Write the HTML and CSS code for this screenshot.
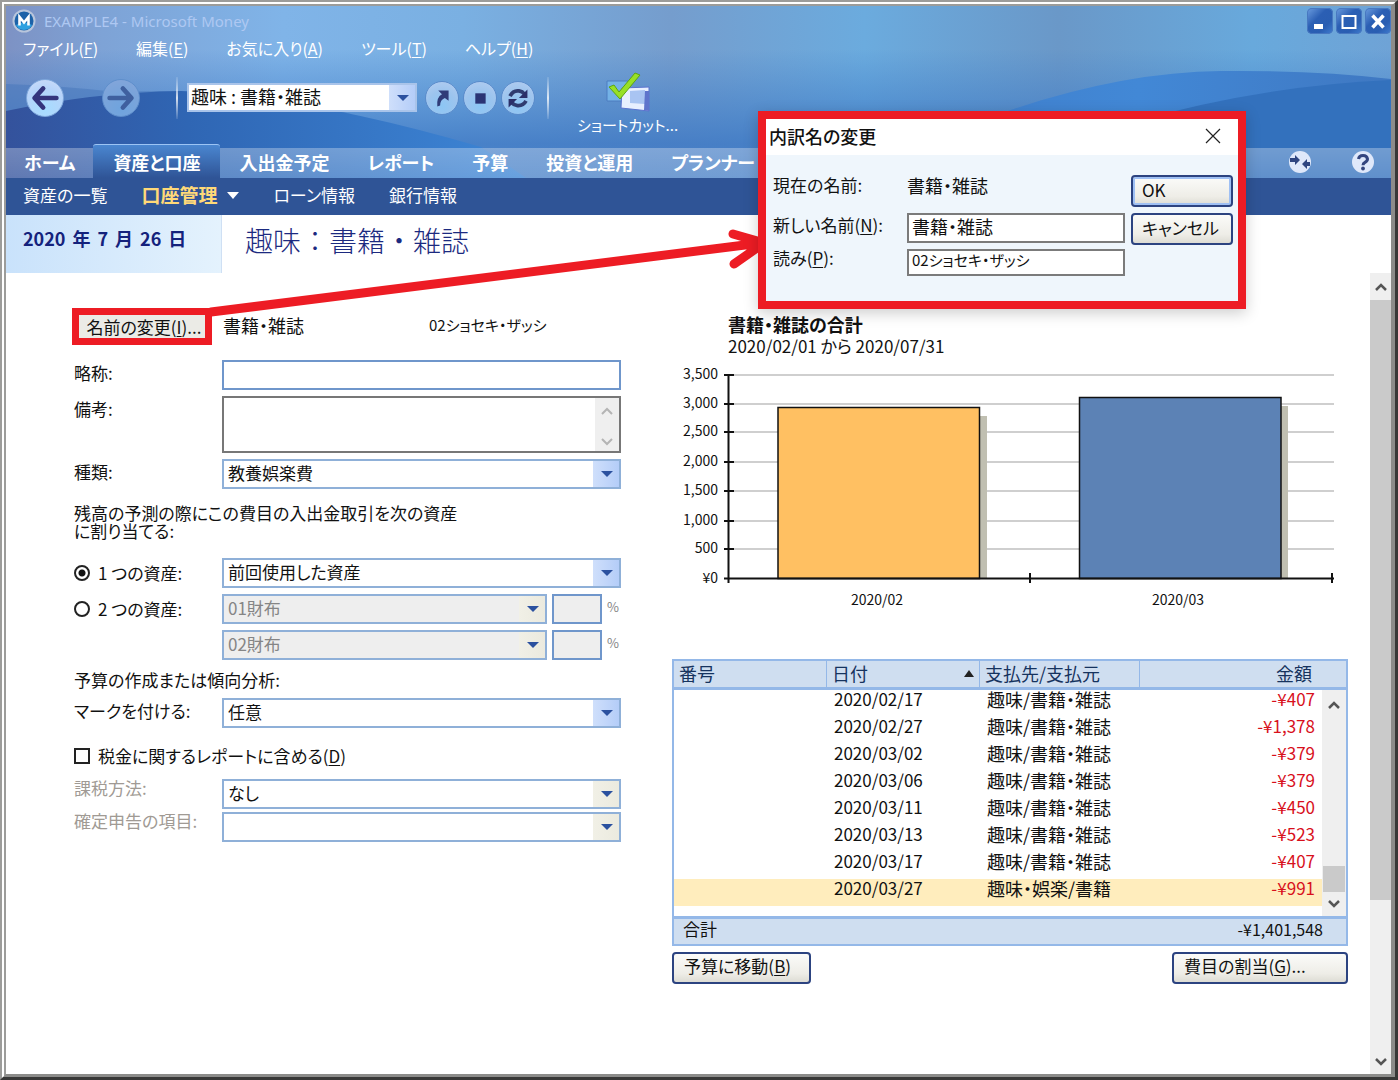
FILE: index.html
```html
<!DOCTYPE html>
<html lang="ja">
<head>
<meta charset="utf-8">
<title>EXAMPLE4 - Microsoft Money</title>
<link rel="stylesheet" href="styles.css">
</head>
<body>
<div class="window">
  <header class="masthead">
    <svg class="sky" viewBox="0 0 1385 172" preserveAspectRatio="none" aria-hidden="true">
      <defs>
        <linearGradient id="skyH" x1="0" x2="1" y1="0" y2="0">
          <stop offset="0" stop-color="#7d92c4"/>
          <stop offset=".07" stop-color="#7ea3d6"/>
          <stop offset=".2" stop-color="#80b4e8"/>
          <stop offset=".33" stop-color="#7ab0e2"/>
          <stop offset=".48" stop-color="#759dcd"/>
          <stop offset=".62" stop-color="#6babde"/>
          <stop offset=".76" stop-color="#6a98c8"/>
          <stop offset=".9" stop-color="#68a9dc"/>
          <stop offset="1" stop-color="#6fa3d6"/>
        </linearGradient>
        <linearGradient id="skyV" x1="0" x2="0" y1="0" y2="1">
          <stop offset=".25" stop-color="#3d7cc8" stop-opacity="0"/>
          <stop offset=".8" stop-color="#3f79c4" stop-opacity=".85"/>
          <stop offset="1" stop-color="#3f79c4" stop-opacity=".8"/>
        </linearGradient>
        <linearGradient id="hill" x1="0" x2="1" y1="0" y2="0">
          <stop offset="0" stop-color="#34529c"/>
          <stop offset=".35" stop-color="#2f66b4"/>
          <stop offset="1" stop-color="#3d86d6"/>
        </linearGradient>
        <linearGradient id="swell" x1="0" x2="1" y1="0" y2="0">
          <stop offset="0" stop-color="#3f7cc8"/>
          <stop offset=".5" stop-color="#4288d6"/>
          <stop offset="1" stop-color="#3f78c2"/>
        </linearGradient>
      </defs>
      <rect width="1385" height="172" fill="url(#skyH)"/>
      <rect width="1385" height="172" fill="url(#skyV)"/>
      <path d="M0 78Q60 80 110 86Q250 80 345 108L330 172H0Z" fill="#4878bc" opacity=".55"/>
      <path d="M0 105Q90 86 175 85Q300 90 475 141L520 172H0Z" fill="url(#hill)"/>
      <path d="M960 120Q1100 66 1215 65Q1310 64 1385 73V172H880Z" fill="url(#swell)"/>
      <path d="M1120 118Q1250 80 1385 74V172H1060Z" fill="#3371bd"/>
    </svg>

    <div class="titlebar">
      <svg class="logo" viewBox="0 0 24 24" aria-hidden="true">
        <circle cx="12" cy="12" r="11.500" fill="#b9c6dc"/>
        <circle cx="12" cy="12" r="9.500" fill="#1d62a8"/>
        <path d="M4 16a9 9 0 0 0 16 0Q12 11 4 16" fill="#2fa0e0"/>
        <path d="M7.500 16.500V8l4.500 5.500L16.500 8v8.500" fill="none" stroke="#fff" stroke-width="2.600"/>
      </svg>
      <span class="app-name">EXAMPLE4 - Microsoft Money</span>
      <div class="window-buttons">
        <button type="button" aria-label="最小化"><svg viewBox="0 0 26 26"><path d="M7 18.500h9" stroke="#fff" stroke-width="5"/></svg></button>
        <button type="button" aria-label="最大化"><svg viewBox="0 0 26 26"><path d="M6 8h14M6 20h14M6.500 7v14M19.500 7v14" stroke="#fff" stroke-width="2"/></svg></button>
        <button type="button" aria-label="閉じる"><svg viewBox="0 0 26 26"><path d="M7.500 7.500l11 12M18.500 7.500l-11 12" stroke="#fff" stroke-width="3.500"/></svg></button>
      </div>
    </div>

    <nav class="menu">
      <a href="#">ファイル(<u>F</u>)</a>
      <a href="#">編集(<u>E</u>)</a>
      <a href="#">お気に入り(<u>A</u>)</a>
      <a href="#">ツール(<u>T</u>)</a>
      <a href="#">ヘルプ(<u>H</u>)</a>
    </nav>

    <div class="toolbar">
      <button type="button" class="round large" aria-label="戻る"><svg viewBox="0 0 38 38"><path d="M31 19H9M17 9L8 19l9 10" fill="none" stroke="#34347c" stroke-width="5" stroke-linecap="round" stroke-linejoin="round"/></svg></button>
      <button type="button" class="round large dim" aria-label="進む"><svg viewBox="0 0 38 38"><path d="M7 19h22M21 9l9 10-9 10" fill="none" stroke="#3f609f" stroke-width="5" stroke-linecap="round" stroke-linejoin="round"/></svg></button>
      <span class="divider"></span>
      <select class="address" aria-label="表示中の項目"><option>趣味 : 書籍・雑誌</option></select>
      <div class="round-group">
        <button type="button" class="round" aria-label="移動"><svg viewBox="0 0 34 34"><path d="M12 26Q11 16 17 13L13 9h11v11l-4-3Q15 19 15 25Z" fill="#2f3c78"/></svg></button>
        <button type="button" class="round" aria-label="中止"><svg viewBox="0 0 34 34"><path d="M12 12h11v11H12Z" fill="#2b3474"/></svg></button>
        <button type="button" class="round" aria-label="更新"><svg viewBox="0 0 34 34"><path d="M8.500 15Q12 8.500 18 9.500q4 .7 5.500 3M25.500 20q-3 5.500-9 5-4-.5-6-3" fill="none" stroke="#2f3c70" stroke-width="4"/><path d="M27 8v9h-9ZM7 27v-9h9Z" fill="#2b2f68"/></svg></button>
      </div>
      <span class="divider"></span>
      <button type="button" class="shortcut">
        <svg viewBox="0 0 46 44" aria-hidden="true">
          <path d="M2 10h21v20H2Z" fill="#74b2e6" stroke="#4c7cc0"/>
          <path d="M17 17l27-1v24l-28-3Z" fill="#e8efff" stroke="#5b73cf"/>
          <path d="M25 20l15-1v14l-15-1Z" fill="#a9c4f2"/>
          <path d="M40 20h4v20l-5-1Z" fill="#5f74cc"/>
          <path d="M4 16l5-2 5 7L30 2l5 2-20 24Z" fill="#98e026" stroke="#5da512"/>
        </svg>
        ショートカット...
      </button>
    </div>

    <nav class="tabs">
      <a href="#">ホーム</a>
      <a href="#" class="current">資産と口座</a>
      <a href="#">入出金予定</a>
      <a href="#">レポート</a>
      <a href="#">予算</a>
      <a href="#">投資と運用</a>
      <a href="#">プランナー</a>
      <span class="tab-tools">
        <button type="button" aria-label="同期"><svg viewBox="0 0 24 24"><circle cx="12" cy="12" r="11" fill="#dfe8fa"/><path d="M2 8h5V5l5 5-5 5v-3H2ZM22 12h-3V9l-5 5 5 5v-3h3Z" fill="#2f4580"/></svg></button>
        <button type="button" aria-label="ヘルプ"><svg viewBox="0 0 24 24"><circle cx="12" cy="12" r="11" fill="#dfe8fa"/><path d="M7.500 9Q8 5.500 12 5.500t4.500 3.500q0 2-2.500 3.300-2 1-2 3" fill="none" stroke="#34457e" stroke-width="3"/><circle cx="12" cy="18.500" r="1.900" fill="#34457e"/></svg></button>
      </span>
    </nav>
  </header>

  <nav class="subnav">
    <a href="#">資産の一覧</a>
    <a href="#" class="current">口座管理<svg viewBox="0 0 12 8" aria-hidden="true"><path d="M0 1h12L6 8Z" fill="#fff"/></svg></a>
    <a href="#">ローン情報</a>
    <a href="#">銀行情報</a>
  </nav>

  <div class="page-head">
    <div class="date"><span>2020</span> <span>年</span> <span>7</span> <span>月</span> <span>26</span> <span>日</span></div>
    <h1>趣味：書籍・雑誌</h1>
  </div>

  <div class="viewport">
    <main class="content">
      <form class="details">
        <div class="name-row">
          <button type="button" class="rename">名前の変更(<u>I</u>)...</button>
          <span class="name">書籍・雑誌</span>
          <span class="reading">02ショセキ・ザッシ</span>
        </div>

        <div class="fields">
          <label for="abbr">略称:</label>
          <input id="abbr" type="text">

          <label for="memo" class="top">備考:</label>
          <div class="memo">
            <textarea id="memo"></textarea>
            <span class="memo-bar"><svg viewBox="0 0 12 8"><path d="M1 7l5-5 5 5" fill="none" stroke="#b4b4b4" stroke-width="2"/></svg><svg viewBox="0 0 12 8"><path d="M1 1l5 5 5-5" fill="none" stroke="#b4b4b4" stroke-width="2"/></svg></span>
          </div>

          <label for="kind">種類:</label>
          <select id="kind"><option>教養娯楽費</option></select>

          <p class="note">残高の予測の際にこの費目の入出金取引を次の資産<br>に割り当てる:</p>

          <label class="choice"><input type="radio" name="asset" checked>1 つの資産:</label>
          <select aria-label="1 つの資産"><option>前回使用した資産</option></select>

          <label class="choice"><input type="radio" name="asset">2 つの資産:</label>
          <div class="split">
            <select disabled aria-label="資産 1"><option>01財布</option></select>
            <input type="text" disabled id="p1"><label for="p1">%</label>
          </div>

          <div class="split second">
            <select disabled aria-label="資産 2"><option>02財布</option></select>
            <input type="text" disabled id="p2"><label for="p2">%</label>
          </div>

          <p class="heading">予算の作成または傾向分析:</p>

          <label for="mark">マークを付ける:</label>
          <select id="mark"><option>任意</option></select>

          <label class="choice wide"><input type="checkbox"><span>税金に関するレポートに含める(<u>D</u>)</span></label>

          <label for="tax" class="muted">課税方法:</label>
          <select id="tax" class="idle"><option>なし</option></select>

          <label for="return" class="muted">確定申告の項目:</label>
          <select id="return" class="idle"><option></option></select>
        </div>
      </form>

      <section class="summary">
        <h2>書籍・雑誌の合計</h2>
        <p class="period">2020/02/01 から 2020/07/31</p>

        <svg class="chart" viewBox="0 -8 676 258" role="img" aria-label="月別の合計">
          <g stroke="#cfcfcf" stroke-width="2">
            <path d="M56 11H662M56 40H662M56 68H662M56 98H662M56 127H662M56 157H662M56 185H662"/>
          </g>
          <path d="M306 52h9v162h-9ZM608 42h8v172h-8Z" fill="#c0bfb1"/>
          <path d="M106 43.500h201.500V214.500H106Z" fill="#ffc062" stroke="#111" stroke-width="1.500"/>
          <path d="M407.500 33.500h201.500V214.500H407.500Z" fill="#5c82b5" stroke="#111" stroke-width="1.500"/>
          <g stroke="#111" stroke-width="2">
            <path d="M56.500 10V219M52 11h10M52 40h10M52 68h10M52 98h10M52 127h10M52 157h10M52 185h10M52 214.500H662"/>
            <path d="M358 209v10M660 209v10"/>
          </g>
          <g class="tick" text-anchor="end">
            <text x="46" y="15">3,500</text>
            <text x="46" y="44">3,000</text>
            <text x="46" y="72">2,500</text>
            <text x="46" y="102">2,000</text>
            <text x="46" y="131">1,500</text>
            <text x="46" y="161">1,000</text>
            <text x="46" y="189">500</text>
            <text x="46" y="219">¥0</text>
          </g>
          <g class="tick" text-anchor="middle">
            <text x="205" y="241">2020/02</text>
            <text x="506" y="241">2020/03</text>
          </g>
        </svg>

        <table class="register">
          <colgroup><col class="c-no"><col class="c-date"><col class="c-payee"><col><col class="c-bar"></colgroup>
          <thead>
            <tr>
              <th>番号</th>
              <th><span class="sorted">日付<svg viewBox="0 0 10 7" aria-hidden="true"><path d="M0 7h10L5 0Z" fill="#222"/></svg></span></th>
              <th>支払先/支払元</th>
              <th colspan="2" class="amount">金額</th>
            </tr>
          </thead>
          <tbody>
            <tr><td></td><td>2020/02/17</td><td class="payee">趣味/書籍・雑誌</td><td class="amount">-¥407</td>
              <td rowspan="9" class="bar-cell"><div class="list-bar"><svg viewBox="0 0 12 8"><path d="M1 7l5-5 5 5" fill="none" stroke="#555" stroke-width="2.500"/></svg><span></span><svg viewBox="0 0 12 8"><path d="M1 1l5 5 5-5" fill="none" stroke="#555" stroke-width="2.500"/></svg></div></td></tr>
            <tr><td></td><td>2020/02/27</td><td class="payee">趣味/書籍・雑誌</td><td class="amount">-¥1,378</td></tr>
            <tr><td></td><td>2020/03/02</td><td class="payee">趣味/書籍・雑誌</td><td class="amount">-¥379</td></tr>
            <tr><td></td><td>2020/03/06</td><td class="payee">趣味/書籍・雑誌</td><td class="amount">-¥379</td></tr>
            <tr><td></td><td>2020/03/11</td><td class="payee">趣味/書籍・雑誌</td><td class="amount">-¥450</td></tr>
            <tr><td></td><td>2020/03/13</td><td class="payee">趣味/書籍・雑誌</td><td class="amount">-¥523</td></tr>
            <tr><td></td><td>2020/03/17</td><td class="payee">趣味/書籍・雑誌</td><td class="amount">-¥407</td></tr>
            <tr class="selected"><td></td><td>2020/03/27</td><td class="payee">趣味・娯楽/書籍</td><td class="amount">-¥991</td></tr>
            <tr class="filler"><td colspan="4"></td></tr>
          </tbody>
          <tfoot>
            <tr><td colspan="2">合計</td><td colspan="3" class="amount">-¥1,401,548</td></tr>
          </tfoot>
        </table>

        <div class="actions">
          <button type="button" class="push">予算に移動(<u>B</u>)</button>
          <button type="button" class="push wide">費目の割当(<u>G</u>)...</button>
        </div>
      </section>
    </main>

    <div class="page-bar" aria-hidden="true">
      <svg viewBox="0 0 12 8"><path d="M1 7l5-5 5 5" fill="none" stroke="#555" stroke-width="2.500"/></svg>
      <span></span>
      <svg viewBox="0 0 12 8"><path d="M1 1l5 5 5-5" fill="none" stroke="#555" stroke-width="2.500"/></svg>
    </div>
  </div>

  <svg class="pointer" viewBox="0 0 560 100" aria-hidden="true">
    <path d="M2 86L552 17M524 8L555 17L525 38" fill="none" stroke="#ed1c24" stroke-width="9" stroke-linecap="round"/>
  </svg>

  <div class="dialog" role="dialog" aria-labelledby="dialog-title">
    <div class="dialog-title">
      <span id="dialog-title">内訳名の変更</span>
      <button type="button" aria-label="閉じる"><svg viewBox="0 0 16 16"><path d="M1 1l14 14M15 1L1 15" stroke="#222" stroke-width="1.200"/></svg></button>
    </div>
    <form class="dialog-body">
      <div class="dialog-fields">
        <span>現在の名前:</span><output class="name">書籍・雑誌</output>
        <label for="new-name">新しい名前(<u>N</u>):</label><input id="new-name" class="name" type="text" value="書籍・雑誌">
        <label for="reading">読み(<u>P</u>):</label><input id="reading" class="reading" type="text" value="02ショセキ・ザッシ">
      </div>
      <div class="dialog-buttons">
        <button type="button" class="push default">OK</button>
        <button type="button" class="push">キャンセル</button>
      </div>
    </form>
  </div>
</div>
</body>
</html>
```
FILE: styles.css
```css
* {
  box-sizing: border-box;
}

body {
  margin: 0;
  color: #111;
  background: #fff;
  font-family: "Noto Sans CJK JP", sans-serif;
  font-size: 17px;
  line-height: 20px;
  font-feature-settings: "palt";
}

h1, h2, p {
  margin: 0;
}

a {
  color: inherit;
  text-decoration: none;
}

u {
  text-underline-offset: 2px;
}

svg {
  display: block;
}

button, input, select, textarea {
  margin: 0;
  color: inherit;
  font: inherit;
  font-feature-settings: inherit;
}

button {
  padding: 0;
  border: 0;
  background: none;
}

.window {
  position: relative;
  display: flex;
  flex-direction: column;
  min-height: 100vh;
  border-style: double ridge ridge double;
  border-width: 6px 7px 6px 6px;
  border-color: #9c9c9a #8c8c8a #8c8c8a #9c9c9a;
}

.name {
  font-size: 18px;
}

.reading {
  font-size: 15px;
}

/* masthead */

.masthead {
  position: relative;
  color: #fff;
}

.sky {
  position: absolute;
  inset: 0;
  width: 100%;
  height: 100%;
}

.titlebar,
.menu,
.toolbar,
.tabs {
  position: relative;
  display: flex;
  align-items: center;
}

.titlebar {
  height: 30px;
  padding-left: 6px;
}

.logo {
  width: 24px;
  height: 24px;
}

.app-name {
  margin-left: 8px;
  color: #aec8f2;
  font-family: "Noto Sans", sans-serif;
  font-size: 15px;
}

.window-buttons {
  display: flex;
  gap: 3px;
  margin-left: auto;
}

.window-buttons button {
  width: 26px;
  height: 26px;
  border-radius: 5px;
  background: linear-gradient(135deg, #6d9ee0, #2b5fb4 40%, #2a5eb2 70%, #3f7cd0);
  box-shadow: inset 0 0 0 1px #4878c0;
}

.menu {
  gap: 38px;
  height: 24px;
  padding-left: 17px;
  font-size: 16px;
}

.toolbar {
  height: 84px;
  padding: 0 0 9px 20px;
}

.round {
  width: 34px;
  height: 34px;
  border: 1px solid #5b8ccb;
  border-radius: 50%;
  background: radial-gradient(circle at 50% 75%, #8cc6f4, #9cc4ee 50%, #b5cdf0);
}

.round svg {
  width: 32px;
  height: 32px;
}

.round.large {
  width: 38px;
  height: 38px;
  margin-right: 38px;
  border-color: #7fa8dc;
  background: radial-gradient(circle at 50% 80%, #a6dcff, #b6d4fa 60%, #cfdcf8);
}

.round.large svg {
  width: 36px;
  height: 36px;
}

.round.large.dim {
  margin-right: 36px;
  border-color: #5f8fcc;
  background: radial-gradient(circle at 50% 80%, #6fa4de, #7ba4da 60%, #86a6da);
}

.divider {
  width: 2px;
  height: 42px;
  background: linear-gradient(rgba(255, 255, 255, .1), rgba(255, 255, 255, .8) 50%, rgba(255, 255, 255, .1));
}

.round-group {
  display: flex;
  gap: 4px;
  margin-right: 12px;
}

.shortcut {
  display: flex;
  flex-direction: column;
  align-items: center;
  align-self: flex-end;
  margin-left: 28px;
  font-size: 15px;
  line-height: 20px;
}

.shortcut svg {
  width: 46px;
  height: 44px;
}

.tabs {
  align-items: flex-end;
  height: 34px;
  background: linear-gradient(transparent 4px, rgba(255, 255, 255, .3) 4px, rgba(255, 255, 255, .22));
  font-size: 18px;
  font-weight: 700;
  line-height: 28px;
}

.tabs a {
  padding: 0 18px 2px;
}

.tabs .current {
  padding: 3px 20px 2px;
  border-top: 1px solid #9cc4f4;
  border-radius: 3px 3px 0 0;
  background: linear-gradient(#4a86d0, #2f5496);
}

.tabs .current ~ a {
  padding-inline: 19px;
}

.tab-tools {
  display: flex;
  gap: 39px;
  margin: 0 16px 4px auto;
}

.tab-tools svg {
  width: 24px;
  height: 24px;
}

.subnav {
  display: flex;
  align-items: center;
  gap: 34px;
  height: 37px;
  padding: 0 17px 4px;
  color: #fff;
  background: #2f5496;
}

.subnav .current {
  display: flex;
  align-items: center;
  gap: 10px;
  color: #ffd978;
  font-size: 19px;
  font-weight: 700;
}

.subnav .current svg {
  width: 12px;
  height: 8px;
}

.page-head {
  display: flex;
  height: 58px;
}

.date {
  display: flex;
  gap: 7px;
  width: 216px;
  padding: 13px 0 0 17px;
  border-right: 1px solid #cfe0f4;
  color: #14227c;
  background: linear-gradient(90deg, #c9e2fb, #e4f2fd);
  font-size: 18px;
  font-weight: 700;
}

h1 {
  padding: 7px 0 0 23px;
  color: #1c2a80;
  font-size: 28px;
  font-weight: 300;
  line-height: 36px;
  font-feature-settings: normal;
}

/* page */

.viewport {
  display: flex;
  flex: 1;
}

.content {
  display: grid;
  flex: 1;
  grid-template-columns: minmax(0, 549fr) minmax(0, 676fr);
  gap: 51px;
  align-items: start;
  padding: 35px 22px 40px 66px;
}

.page-bar {
  display: flex;
  flex-direction: column;
  align-items: center;
  width: 21px;
  padding: 10px 0 8px;
  background: #efefef;
}

.page-bar svg {
  width: 12px;
  height: 8px;
}

.page-bar span {
  width: 100%;
  height: 600px;
  margin: 9px 0 auto;
  background: #cacaca;
}

.name-row {
  display: grid;
  grid-template-columns: 151px 206px 1fr;
  align-items: center;
  height: 37px;
}

.name-row span {
  padding-bottom: 3px;
}

.rename {
  width: 140px;
  height: 37px;
  padding-left: 4px;
  border: 7px solid #ed1c24;
  background: #ebebe6;
  font-size: 17px;
  line-height: 22px;
  white-space: nowrap;
}

.fields {
  display: grid;
  grid-template-columns: 148px minmax(0, 1fr);
  gap: 6px 0;
  padding: 15px 0 0 2px;
}

.fields label {
  line-height: 26px;
}

.fields input[type="text"],
select {
  height: 30px;
  border: 2px solid #8fb0d8;
  border-radius: 0;
  background-color: #fff;
}

.fields input[type="text"] {
  width: 100%;
  border-color: #6f96cb;
}

select {
  width: 100%;
  padding: 0 28px 3px 4px;
  appearance: none;
  background-image:
    url("data:image/svg+xml,%3Csvg xmlns='http://www.w3.org/2000/svg' width='12' height='6'%3E%3Cpath d='M0 0h12L6 6Z' fill='%232b519f'/%3E%3C/svg%3E"),
    linear-gradient(90deg, #cfdffb, #b4cdf8);
  background-repeat: no-repeat;
  background-position: right 6px center, right center;
  background-size: 12px 6px, 26px 100%;
}

select.address {
  width: 230px;
  height: 29px;
  margin: 0 8px 0 9px;
  padding-left: 2px;
  border-color: #a9c4ea;
  color: #111;
  font-size: 18px;
}

select:disabled,
.split input[type="text"]:disabled {
  color: #858585;
  background-color: #eee;
  opacity: 1;
}

select:disabled,
select.idle {
  background-image:
    url("data:image/svg+xml,%3Csvg xmlns='http://www.w3.org/2000/svg' width='12' height='6'%3E%3Cpath d='M0 0h12L6 6Z' fill='%232b519f'/%3E%3C/svg%3E"),
    linear-gradient(90deg, #f1f0e6, #ebeadf);
}

select.idle {
  margin-bottom: -3px;
}

.memo {
  display: flex;
  height: 57px;
  border: 2px solid #777;
}

.memo textarea {
  flex: 1;
  border: 0;
  resize: none;
}

.memo-bar {
  display: flex;
  flex-direction: column;
  justify-content: space-between;
  align-items: center;
  width: 24px;
  padding: 9px 0 5px;
  background: #efefef;
}

.memo-bar svg {
  width: 12px;
  height: 8px;
}

.note,
.heading,
.fields .wide {
  grid-column: 1 / -1;
}

.note {
  padding: 9px 0 12px;
  line-height: 18px;
}

.heading {
  padding-top: 1px;
  line-height: 25px;
}

.fields .choice {
  display: flex;
  align-items: center;
  gap: 8px;
}

.fields .wide {
  padding: 9px 0 4px;
}

.choice input {
  width: 16px;
  height: 16px;
  appearance: none;
  border: 2px solid #222;
  background: #fff;
}

.choice input[type="radio"] {
  border-radius: 50%;
}

.choice input[type="radio"]:checked {
  background: radial-gradient(circle, #111 3px, #fff 4px);
}

.split {
  display: grid;
  grid-template-columns: minmax(0, 1fr) 50px 14px;
  gap: 5px;
}

.split label {
  color: #858585;
  font-size: 13px;
}

.second {
  grid-column: 2;
}

.fields .muted {
  color: #a09a94;
  line-height: 18px;
}

/* summary */

.summary {
  padding-top: 5px;
}

h2,
.period {
  padding-left: 56px;
}

h2 {
  font-size: 18px;
  line-height: 22px;
}

.period {
  line-height: 21px;
}

.chart {
  width: 100%;
  margin-bottom: 45px;
}

.tick {
  fill: #111;
  font-size: 14px;
}

.register {
  width: 100%;
  border: 2px solid #94b8e8;
  border-spacing: 0;
  table-layout: fixed;
}

.c-no, .c-date {
  width: 153px;
}

.c-payee {
  width: 160px;
}

.c-bar {
  width: 24px;
}

.register th,
.register td {
  padding: 0 0 9px 7px;
  line-height: 18px;
  text-align: left;
}

.register th {
  height: 29px;
  padding: 0 5px 2px;
  border-right: 1px solid #94b8e8;
  border-bottom: 3px solid #94b8e8;
  color: #16335e;
  background: #cfdef0;
  font-size: 18px;
  font-weight: 400;
}

.register th.amount {
  padding-right: 34px;
  border-right: 0;
}

.sorted {
  display: flex;
  justify-content: space-between;
  align-items: center;
}

.sorted svg {
  width: 10px;
  height: 7px;
}

.register .payee {
  font-size: 18px;
}

.register .amount {
  text-align: right;
}

.register tbody .amount {
  padding-right: 7px;
  color: #d8101c;
}

.selected td {
  background: #ffedbd;
}

.register .filler td {
  height: 10px;
  padding: 0;
}

.register .bar-cell {
  height: 1px;
  padding: 0;
  background: #efefef;
}

.list-bar {
  display: flex;
  flex-direction: column;
  justify-content: space-between;
  align-items: center;
  height: 226px;
  padding: 11px 0 8px;
}

.list-bar svg {
  width: 12px;
  height: 8px;
}

.list-bar span {
  width: 22px;
  height: 26px;
  margin: auto 0 8px;
  background: #cacaca;
}

.register tfoot td {
  height: 28px;
  padding: 0 9px 6px;
  border-top: 3px solid #94b8e8;
  background: #cfdef0;
}

.register tfoot .amount {
  padding-right: 23px;
  font-size: 16px;
}

.actions {
  display: flex;
  justify-content: space-between;
  padding-top: 6px;
}

.push {
  height: 32px;
  padding: 0 18px 4px 10px;
  border: 2px solid #2c4380;
  border-radius: 4px;
  background: linear-gradient(#fbfbf9, #eeede7 70%, #dddcd4);
  text-align: left;
  white-space: nowrap;
}

.push.wide {
  width: 176px;
}

/* callout */

.pointer {
  position: absolute;
  top: 220px;
  left: 203px;
  width: 560px;
  height: 100px;
}

.dialog {
  position: absolute;
  top: 105px;
  left: 752px;
  width: 488px;
  border: 8px solid #ed1c24;
  background: #eff6fc;
  box-shadow: 0 4px 14px rgba(0, 0, 0, .2);
}

.dialog-title {
  display: flex;
  justify-content: space-between;
  align-items: center;
  height: 36px;
  padding: 0 17px 2px 3px;
  background: #fff;
  font-size: 18px;
  font-weight: 500;
}

.dialog-title svg {
  width: 16px;
  height: 16px;
}

.dialog-body {
  display: grid;
  grid-template-columns: minmax(0, 1fr) 102px;
  gap: 6px;
  padding: 20px 5px 25px 7px;
}

.dialog-fields {
  display: grid;
  grid-template-columns: 134px minmax(0, 1fr);
  grid-template-rows: 32px 30px 27px;
  gap: 6px 0;
  line-height: 20px;
}

.dialog-fields label {
  line-height: 24px;
}

.dialog-fields [for="reading"] {
  line-height: 18px;
}

.dialog-fields input {
  padding: 0 3px 5px;
  border: 2px solid #7b7b7b;
  background: #fff;
}

.dialog-buttons {
  display: flex;
  flex-direction: column;
  gap: 6px;
}

.dialog .push {
  padding: 0 0 3px 9px;
}

.push.default {
  box-shadow: inset 0 0 0 2px #9fc0f4;
}
```
